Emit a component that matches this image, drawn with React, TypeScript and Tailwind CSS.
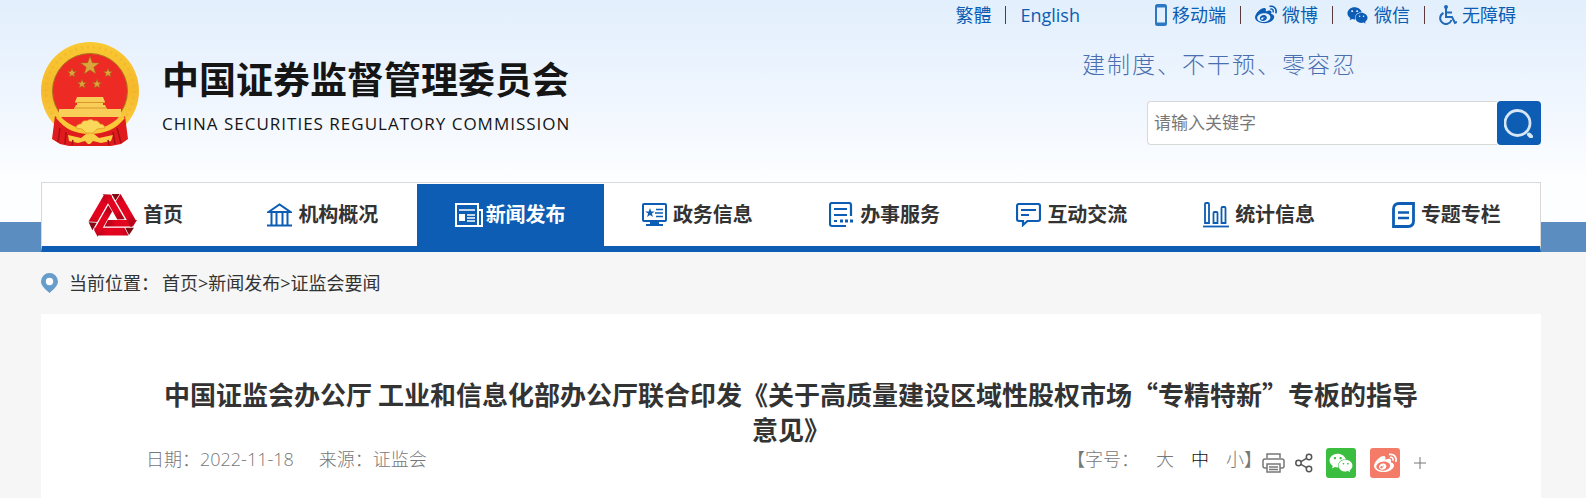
import type { ReactNode } from 'react'
import { FaWeibo, FaWeixin } from 'react-icons/fa6'

type NavItem = {
  label: string
  icon: ReactNode
  active?: boolean
}

const star = (cx: number, cy: number, r: number) =>
  Array.from({ length: 10 }, (_, i) => {
    const a = (Math.PI / 5) * i - Math.PI / 2
    const d = i % 2 ? r * 0.4 : r
    return `${cx + d * Math.cos(a)},${cy + d * Math.sin(a)}`
  }).join(' ')

function Emblem() {
  return (
    <svg className="h-[104px] w-[99px] shrink-0" viewBox="0 0 99 104" aria-hidden="true">
      <defs>
        <linearGradient id="gold" x1="0" y1="0" x2="0" y2="1">
          <stop offset="0" stopColor="#f9c933" />
          <stop offset="0.5" stopColor="#f5b92c" />
          <stop offset="1" stopColor="#fbd348" />
        </linearGradient>
      </defs>
      <circle cx="49" cy="49" r="49" fill="url(#gold)" />
      <circle cx="49" cy="49" r="44" fill="none" stroke="#e8a827" strokeWidth="3" strokeDasharray="2 4" opacity="0.35" />
      <circle cx="49" cy="49" r="37.500" fill="#ee2a24" stroke="#a9771c" strokeWidth="1" />
      <g fill="#dca53a" stroke="#9a5c17" strokeWidth="0.5">
        <polygon points={star(49, 24, 10)} />
        <polygon points={star(31, 31, 5)} />
        <polygon points={star(67, 31, 5)} />
        <polygon points={star(41, 42, 5)} />
        <polygon points={star(56, 42, 5)} />
      </g>
      <path d="M36 55h26l2 5h-2v3h2l2 4h14v8H18v-8h15l2-4h1v-3h-2z" fill="#f8cd58" />
      <path d="M34 60.500h30M33 66h32" stroke="#d9962a" strokeWidth="1" />
      <path d="M14 74c9 9 18 14 24 14h22c7 0 16-5 24-14l3 23-7 5-10 2H28l-9-2-8-5z" fill="#df1b1d" />
      <path d="M20 75h58c-6 9-14 12-24 12H44c-8 0-18-3-24-12z" fill="#ee2a24" />
      <path d="M19 74c8 9 18 13 30 13s22-4 30-13l5 2C75 87 64 92 49 92S24 87 15 76z" fill="#f8c838" />
      <path d="M35 86c0-3 3-4 5-4 1-3 4-4 6-3 2-2 5-2 7 0 3-1 5 1 6 3 3 0 5 2 5 4l-8 1-4 4h-7l-4-4z" fill="#fbd75a" stroke="#e09a25" strokeWidth="0.7" />
      <path d="M27 93l13 3 5-4h8l5 4 14-3-2 6-10 2-8-2-3 3h-2l-3-3-7 2-9-2z" fill="#f9cd45" />
      <path d="M19 86l-2 14M25 90l-1 12M76 86l4 15M72 90l2 12M32 98l-1 5M67 98l1 5" stroke="#a90f14" strokeWidth="1.500" />
    </svg>
  )
}

// three folded ribbons, each turned by 120 degrees
function HomeMark() {
  return (
    <svg className="h-[43px] w-[49px]" viewBox="0 1 49 43" aria-hidden="true">
      <defs>
        <linearGradient id="ribbon" x1="0" y1="0" x2="1" y2="0">
          <stop offset="0" stopColor="#a00014" />
          <stop offset="0.35" stopColor="#e2041f" />
          <stop offset="0.75" stopColor="#e2041f" />
          <stop offset="1" stopColor="#c00018" />
        </linearGradient>
      </defs>
      {[0, 120, 240].map(angle => (
        <g key={angle} transform={`translate(24.5 24) rotate(${angle})`}>
          <polygon points="-14,18.500 16,18.500 12,10.800 -18.500,10.800" fill="url(#ribbon)" />
          <polygon points="12.800,10.800 21.500,10.800 16.500,18" fill="#820812" />
          <polygon points="-8,9.500 20.500,9.500 24.500,3 -4.500,3" fill="url(#ribbon)" />
        </g>
      ))}
    </svg>
  )
}

const iconProps = {
  fill: 'none',
  stroke: 'currentColor',
  strokeWidth: 2,
  'aria-hidden': true,
} as const

const NAV: NavItem[] = [
  { label: '首页', icon: <HomeMark /> },
  {
    label: '机构概况',
    icon: (
      <svg className="h-[24px] w-[25px]" viewBox="0 0 25 24" {...iconProps}>
        <path d="M1.500 9L12.500 1.500l11 7.500z" strokeWidth="2" />
        <path d="M4.500 10v12M9.500 10v12M15.500 10v12M20.500 10v12M0 22.500h25" strokeWidth="2" />
      </svg>
    ),
  },
  {
    label: '新闻发布',
    active: true,
    icon: (
      <svg className="h-[24px] w-[28px]" viewBox="0 0 28 24" {...iconProps}>
        <path d="M1 1h22v22H1zM24 7h3v16h-5" />
        <path d="M4 7h16M12 12h8M12 15h8M12 18h8" strokeWidth="1.500" />
        <path d="M4 11h6v7H4z" fill="currentColor" stroke="none" />
      </svg>
    ),
  },
  {
    label: '政务信息',
    icon: (
      <svg className="h-[24px] w-[25px]" viewBox="0 0 25 24" {...iconProps}>
        <rect x="1" y="1" width="23" height="17" rx="1" />
        <polygon points={star(8, 10, 5)} fill="currentColor" stroke="none" />
        <path d="M14 6.500h7M13 10h8M14 13.500h7" strokeWidth="1.600" />
        <path d="M8 18h9v3h4v2H4v-2h4z" fill="currentColor" stroke="none" />
      </svg>
    ),
  },
  {
    label: '办事服务',
    icon: (
      <svg className="h-[26px] w-[25px]" viewBox="0 0 25 26" {...iconProps}>
        <path d="M22 14V3a2 2 0 0 0-2-2H3a2 2 0 0 0-2 2v19a2 2 0 0 0 2 2h14" strokeWidth="2.200" />
        <path d="M5 7h13M5 13h13M5 19h3" />
        <path d="M11 19h3M16 19h3M21 19h3" strokeWidth="3" />
      </svg>
    ),
  },
  {
    label: '互动交流',
    icon: (
      <svg className="h-[24px] w-[25px]" viewBox="0 0 25 24" {...iconProps}>
        <path d="M3 1h19a2 2 0 0 1 2 2v13a2 2 0 0 1-2 2H11.500L7 22v-4H3a2 2 0 0 1-2-2V3a2 2 0 0 1 2-2z" strokeWidth="2.200" />
        <path d="M5 7h15M5 12h8" />
      </svg>
    ),
  },
  {
    label: '统计信息',
    icon: (
      <svg className="h-[26px] w-[26px]" viewBox="0 0 26 26" {...iconProps}>
        <path d="M2 21V2q0-1 1-1h2q1 0 1 1v19zM10.500 21V11q0-1 1-1h2q1 0 1 1v10zM18.500 21V6q0-1 1-1h2q1 0 1 1v15z" strokeWidth="1.800" />
        <path d="M0 24.500h26" strokeWidth="1.800" />
      </svg>
    ),
  },
  {
    label: '专题专栏',
    icon: (
      <svg className="h-[26px] w-[23px]" viewBox="0 0 23 26" {...iconProps}>
        <path d="M7 1.500h14.500V19q0 5.500-5.500 5.500H1.500V7Q1.500 1.500 7 1.500z" strokeWidth="2.800" />
        <path d="M6 10.500h11M6 16h11" strokeWidth="2.400" />
      </svg>
    ),
  },
]

const CRUMBS = ['首页', '新闻发布', '证监会要闻']

function Divider() {
  return <span className="mx-[14px] h-[18px] w-px bg-[#5a3a3a]" />
}

export default function App() {
  return (
    <div className="min-h-screen bg-[#f6f6f6] font-['Open_Sans','Noto_Sans_CJK_SC',sans-serif] text-[#333]">
      <div className="bg-linear-to-b from-[#e2effc] via-[#eef5fe] to-[#fdfeff] pr-[45px] pl-[41px]">
        <header className="flex h-[182px] justify-between">
          {/* Logo */}
          <div className="flex items-start gap-[22px] pt-[42px]">
            <Emblem />
            <div className="pt-[10px] text-[#151515]">
              <h1 className="text-[37px] leading-[56px] font-bold whitespace-nowrap">中国证券监督管理委员会</h1>
              <p className="text-[17px] leading-[32px] tracking-[1px] whitespace-nowrap">
                CHINA SECURITIES REGULATORY COMMISSION
              </p>
            </div>
          </div>

          {/* Top links, slogan and search */}
          <div className="flex flex-col items-end">
            <div className="flex h-[30px] items-center pr-[25px] text-[18px] text-[#0c5db3]">
              <a href="#">繁體</a>
              <Divider />
              <a href="#" className="mr-[75px]">English</a>
              <a href="#" className="flex items-center gap-[5px]">
                <svg className="h-[22px] w-[12px]" viewBox="0 0 12 22" aria-hidden="true">
                  <rect x="1" y="1" width="10" height="20" rx="1.500" fill="none" stroke="#2c78c4" strokeWidth="2" />
                  <path d="M1 2.500h10M1 19.500h10" stroke="#2c78c4" strokeWidth="2" />
                </svg>
                移动端
              </a>
              <Divider />
              <a href="#" className="flex items-center gap-[5px]">
                <FaWeibo className="size-[22px]" />
                微博
              </a>
              <Divider />
              <a href="#" className="flex items-center gap-[6px]">
                <FaWeixin className="size-[21px]" />
                微信
              </a>
              <Divider />
              <a href="#" className="flex items-center gap-[5px]">
                <svg className="h-[20px] w-[18px]" viewBox="0 0 18 20" fill="none" stroke="#2068b8" strokeWidth="2" aria-hidden="true">
                  <circle cx="7" cy="2" r="2" fill="#2068b8" stroke="none" />
                  <path d="M7 3v9h6l3 6 2-1" />
                  <path d="M7 7.500h6" />
                  <path d="M4.500 8A5.800 5.800 0 1 0 12.500 15" />
                </svg>
                无障碍
              </a>
            </div>
            <p className="mt-[16px] mr-[184px] text-[23px] leading-[36px] font-light tracking-[2px] text-[#4a6fb0]">
              建制度、不干预、零容忍
            </p>
            <form className="mt-[19px] flex h-[44px] w-[394px]" onSubmit={e => e.preventDefault()}>
              <input
                type="text"
                aria-label="请输入关键字"
                placeholder="请输入关键字"
                className="min-w-0 flex-1 rounded-l-[4px] border border-r-0 border-[#d8d8d8] bg-white px-[6px] text-[17px] outline-none placeholder:text-[#777]"
              />
              <button type="submit" aria-label="搜索" className="flex w-[44px] items-center justify-center rounded-[4px] bg-[#0c5db3]">
                <svg className="size-[30px]" viewBox="0 0 30 30" fill="none" stroke="#d7e6f5" aria-hidden="true">
                  <circle cx="13.500" cy="15" r="12.500" strokeWidth="2.800" />
                  <path d="M25 26.500l2 2" strokeWidth="4" strokeLinecap="round" />
                </svg>
              </button>
            </form>
          </div>
        </header>
      </div>

      {/* Main nav */}
      <div className="bg-[linear-gradient(to_bottom,#fdfeff_40px,#5b8dc0_40px)] pr-[45px] pl-[41px]">
        <nav className="flex h-[70px] border-x border-t border-b-[6px] border-x-[#d9d9d9] border-t-[#d9d9d9] border-b-[#0c5db3] bg-white pt-px">
          {NAV.map(item => (
            <a
              key={item.label}
              href="#"
              className={`flex flex-1 items-center justify-center text-[20px] font-bold whitespace-nowrap
                ${item.active ? 'gap-[3px] bg-[#0c5db3] text-white' : 'gap-[6px] text-[#0c5db3]'}`}
            >
              {item.icon}
              <span className={item.active ? 'text-white' : 'text-[#333]'}>{item.label}</span>
            </a>
          ))}
        </nav>
      </div>

      <main className="pr-[45px] pl-[41px]">
        {/* Breadcrumb */}
        <div className="flex h-[62px] items-center text-[18px]">
          <svg className="mr-[11px] h-[20px] w-[17px]" viewBox="0 0 17 20" aria-hidden="true">
            <path d="M8.500 0A8.500 8.500 0 0 0 0 8.500C0 13 5 17 8.500 20 12 17 17 13 17 8.500A8.500 8.500 0 0 0 8.500 0z" fill="#669dcb" />
            <circle cx="8.500" cy="8.500" r="3.700" fill="#fff" />
          </svg>
          <span className="mr-[3px]">当前位置：</span>
          {CRUMBS.map((crumb, i) => (
            <span key={crumb}>
              {i > 0 && '>'}
              <a href="#">{crumb}</a>
            </span>
          ))}
        </div>

        {/* Article */}
        <article className="min-h-[184px] bg-white px-[105px] pt-[62px]">
          <h2 className="px-[10px] text-center font-['Noto_Sans_CJK_SC',sans-serif] text-[26px] leading-[35px] font-bold">
            中国证监会办公厅 工业和信息化部办公厅联合印发《关于高质量建设区域性股权市场“专精特新”专板的指导意见》
          </h2>
          <div className="mt-[2px] flex items-start justify-between text-[18px] leading-[22px] font-light text-[#777]">
            <div className="flex gap-[25px]">
              <span>日期：2022-11-18</span>
              <span>来源：证监会</span>
            </div>
            <div className="flex items-start pr-[10px]">
              <span>【字号：</span>
              <button className="ml-[17px]">大</button>
              <button className="ml-[17px] text-[#111]">中</button>
              <button className="ml-[17px]">小</button>
              <span>】</span>
              <div className="flex h-[30px] items-center">
                <button aria-label="打印">
                  <svg className="h-[20px] w-[23px]" viewBox="0 0 23 20" fill="none" stroke="#777" strokeWidth="1.500" aria-hidden="true">
                    <path d="M5 5V1h13v4M5 15H3q-2 0-2-2V8q0-2 2-2h17q2 0 2 2v5q0 2-2 2h-2" />
                    <path d="M5 11h13v8H5zM7 14h9M7 16.500h9" />
                  </svg>
                </button>
                <button aria-label="分享" className="ml-[10px]">
                  <svg className="h-[20px] w-[18px]" viewBox="0 0 18 20" fill="none" stroke="#555" strokeWidth="1.500" aria-hidden="true">
                    <circle cx="3.500" cy="10" r="2.700" />
                    <circle cx="14" cy="4" r="2.700" />
                    <circle cx="14" cy="16" r="2.700" />
                    <path d="M6 8.600l5.500-3.200M6 11.400l5.500 3.200" />
                  </svg>
                </button>
                <button aria-label="微信" className="ml-[13px] flex size-[30px] items-center justify-center rounded-[3px] bg-[#3bbd3f] text-white">
                  <FaWeixin className="size-[24px]" />
                </button>
                <button aria-label="微博" className="ml-[14px] flex size-[30px] items-center justify-center rounded-[3px] bg-[#f57b69] text-white">
                  <FaWeibo className="size-[23px]" />
                </button>
                <button aria-label="更多" className="ml-[14px]">
                  <svg className="size-[12px]" viewBox="0 0 12 12" stroke="#777" aria-hidden="true">
                    <path d="M6 0v12M0 6h12" />
                  </svg>
                </button>
              </div>
            </div>
          </div>
        </article>
      </main>
    </div>
  )
}
